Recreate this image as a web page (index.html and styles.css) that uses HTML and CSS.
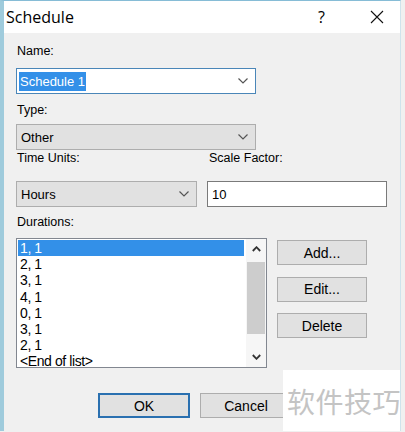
FILE: index.html
```html
<!DOCTYPE html>
<html>
<head>
<meta charset="utf-8">
<link rel="stylesheet" href="styles.css">
</head>
<body>
<div class="window">
  <div class="titlebar">
    <span class="title">Schedule</span>
    <span class="help">?</span>
    <span class="close"><svg width="14" height="14" viewBox="0 0 14 14"><path d="M1 1L13 13M13 1L1 13" stroke="#111" stroke-width="1.1" fill="none"/></svg></span>
  </div>
  <div class="content">
    <div class="label name-label">Name:</div>
    <div class="combo combo-edit name-combo">
      <span class="sel">Schedule 1</span>
      <svg class="chev" width="10" height="6" viewBox="0 0 10 6"><polyline points="0.5,0.5 5,5 9.5,0.5" fill="none" stroke="#555" stroke-width="1.2"/></svg>
    </div>
    <div class="label type-label">Type:</div>
    <div class="combo type-combo">
      <span class="val">Other</span>
      <svg class="chev" width="10" height="6" viewBox="0 0 10 6"><polyline points="0.5,0.5 5,5 9.5,0.5" fill="none" stroke="#555" stroke-width="1.2"/></svg>
    </div>
    <div class="row labels-row">
      <div class="label col-left">Time Units:</div>
      <div class="label col-right">Scale Factor:</div>
    </div>
    <div class="row fields-row">
      <div class="combo hours-combo">
        <span class="val">Hours</span>
        <svg class="chev" width="10" height="6" viewBox="0 0 10 6"><polyline points="0.5,0.5 5,5 9.5,0.5" fill="none" stroke="#555" stroke-width="1.2"/></svg>
      </div>
      <div class="textbox">10</div>
    </div>
    <div class="label dur-label">Durations:</div>
    <div class="row list-row">
      <div class="listbox">
        <div class="items">
          <div class="item selected">1, 1</div>
          <div class="item">2, 1</div>
          <div class="item">3, 1</div>
          <div class="item">4, 1</div>
          <div class="item">0, 1</div>
          <div class="item">3, 1</div>
          <div class="item">2, 1</div>
          <div class="item">&lt;End of list&gt;</div>
        </div>
        <div class="scrollbar">
          <div class="arrow"><svg width="9" height="6" viewBox="0 0 9 6"><polyline points="0.8,5 4.5,1.2 8.2,5" fill="none" stroke="#333" stroke-width="1.8"/></svg></div>
          <div class="track"><div class="thumb"></div></div>
          <div class="arrow"><svg width="9" height="6" viewBox="0 0 9 6"><polyline points="0.8,1 4.5,4.8 8.2,1" fill="none" stroke="#333" stroke-width="1.8"/></svg></div>
        </div>
      </div>
      <div class="side-buttons">
        <div class="btn">Add...</div>
        <div class="btn">Edit...</div>
        <div class="btn">Delete</div>
      </div>
    </div>
    <div class="row bottom-row">
      <div class="btn btn-default">OK</div>
      <div class="btn">Cancel</div>
    </div>
  </div>
  <div class="watermark">软件技巧</div>
</div>
</body>
</html>
```
FILE: styles.css
```css
html, body {
  margin: 0;
  padding: 0;
  background: #f0f0f0;
}
.window {
  position: relative;
  width: 401px;
  height: 431px;
  border-top: 1px solid #86bcd6;
  border-left: 4px solid #9fcbdc;
  border-right: 1px solid #cfe3ec;
  box-sizing: border-box;
  background: #f0f0f0;
  overflow: hidden;
  font-family: "Liberation Sans", Arial, sans-serif;
  font-size: 13px;
  color: #000;
}
.titlebar {
  height: 32px;
  background: #fff;
  display: flex;
  align-items: center;
}
.title {
  font-family: "Open Sans", "Noto Sans", sans-serif;
  font-size: 16px;
  padding-left: 2px;
  flex: 1;
  margin-top: -1px;
}
.help {
  font-family: "Open Sans", sans-serif;
  font-size: 16px;
  width: 52px;
  margin-top: -1px;
}
.close {
  width: 30px;
  display: flex;
  align-items: center;
  margin-top: -1px;
}
.content {
  padding-left: 12px;
  display: flex;
  flex-direction: column;
}
.label {
  height: 15px;
  line-height: 15px;
  font-size: 12.5px;
}
.name-label { margin-top: 11px; padding-left: 1px; }
.type-label { margin-top: 9px; padding-left: 1px; }
.labels-row { margin-top: 1px; }
.col-left { width: 192px; padding-left: 1px; }
.col-right { padding-left: 0; }
.dur-label { margin-top: 8px; padding-left: 1px; }
.row { display: flex; }
.combo {
  box-sizing: border-box;
  height: 26px;
  border: 1px solid #adadad;
  background: #e1e1e1;
  display: flex;
  align-items: center;
  position: relative;
}
.combo .val { padding-left: 4px; flex: 1; }
.combo .chev { margin-right: 7px; }
.combo-edit {
  background: #fff;
  border-color: #4a86b8;
}
.name-combo { width: 240px; margin-top: 9px; justify-content: space-between; }
.name-combo .sel {
  margin-left: 2px;
  background: #3390e8;
  color: #fff;
  padding: 2px 1px 2px 1px;
  line-height: 15px;
}
.type-combo { width: 240px; margin-top: 6px; }
.fields-row { margin-top: 15px; gap: 10px; }
.hours-combo { width: 181px; height: 26px; }
.textbox {
  box-sizing: border-box;
  width: 180px;
  height: 26px;
  border: 1px solid #7a7a7a;
  background: #fff;
  padding-left: 4px;
  display: flex;
  align-items: center;
}
.list-row { margin-top: 8px; gap: 10px; }
.listbox {
  box-sizing: border-box;
  width: 251px;
  height: 130px;
  border: 1px solid #828790;
  background: #fff;
  display: flex;
  overflow: hidden;
}
.items {
  flex: 1;
  padding-top: 1px;
  padding-left: 1px;
}
.item {
  height: 16.2px;
  line-height: 16px;
  padding-left: 2px;
  font-size: 14px;
  letter-spacing: -0.4px;
  white-space: nowrap;
}
.item.selected {
  background: #3390e8;
  color: #fff;
  margin-right: 2px;
}
.scrollbar {
  width: 20px;
  display: flex;
  flex-direction: column;
  background: #f6f6f6;
}
.arrow {
  height: 20px;
  display: flex;
  align-items: center;
  justify-content: center;
}
.track {
  flex: 1;
  padding-top: 3px;
}
.thumb {
  margin: 0 1px;
  height: 72px;
  background: #cdcdcd;
}
.side-buttons {
  display: flex;
  flex-direction: column;
  gap: 11.5px;
  padding-top: 2px;
}
.btn {
  box-sizing: border-box;
  width: 90px;
  height: 25px;
  border: 1px solid #adadad;
  background: #e1e1e1;
  display: flex;
  align-items: center;
  justify-content: center;
  font-size: 14px;
}
.bottom-row {
  margin-top: 25px;
  padding-left: 82px;
  gap: 10px;
}
.bottom-row .btn { width: 92px; }
.btn-default {
  border: 2px solid #2a70b0;
}
.watermark {
  position: absolute;
  left: 279px;
  top: 369px;
  width: 130px;
  height: 70px;
  background: #fff;
  color: #c4c4c4;
  font-family: "Noto Sans CJK SC", sans-serif;
  font-size: 28px;
  line-height: 62px;
  padding-left: 4px;
  letter-spacing: 0.5px;
}
```
